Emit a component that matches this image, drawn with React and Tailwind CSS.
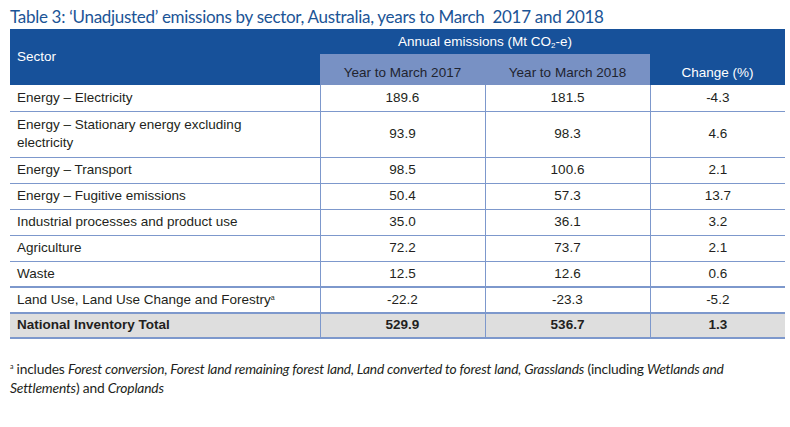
import React from "react";

const rows = [
  { name: "Energy – Electricity", a: "189.6", b: "181.5", c: "-4.3" },
  { name: "Energy – Stationary energy excluding electricity", a: "93.9", b: "98.3", c: "4.6", tall: true },
  { name: "Energy – Transport", a: "98.5", b: "100.6", c: "2.1" },
  { name: "Energy – Fugitive emissions", a: "50.4", b: "57.3", c: "13.7" },
  { name: "Industrial processes and product use", a: "35.0", b: "36.1", c: "3.2" },
  { name: "Agriculture", a: "72.2", b: "73.7", c: "2.1" },
  { name: "Waste", a: "12.5", b: "12.6", c: "0.6" },
];

function App() {
  return (
    <div className="w-[790px] h-[427px] bg-white pt-[6px] pl-[10px]" style={{ fontFamily: "'Liberation Sans', Arial, sans-serif" }}>
      <h1 className="text-[17px] leading-[22px] text-[#1b5496] tracking-[-0.3px]" style={{ fontFamily: "Lato, 'Open Sans', sans-serif" }}>
        Table 3: ‘Unadjusted’ emissions by sector, Australia, years to March&nbsp; 2017 and 2018
      </h1>
      <table className="mt-[1px] w-[775px] border-collapse text-[13.5px] text-[#231f20] table-fixed">
        <colgroup>
          <col className="w-[310px]" />
          <col className="w-[165px]" />
          <col className="w-[165px]" />
          <col className="w-[135px]" />
        </colgroup>
        <thead>
          <tr className="h-[25px] bg-[#17519a] text-white">
            <th rowSpan={2} className="text-left font-normal pl-[7px] align-middle">Sector</th>
            <th colSpan={2} className="font-normal text-center pt-[2px]">
              Annual emissions (Mt CO<sub className="text-[8px]">2</sub>-e)
            </th>
            <th className="bg-[#17519a]"></th>
          </tr>
          <tr className="h-[31px] text-white">
            <th className="bg-[#7891c4] font-normal text-[#1f2430] pt-[8px]">Year to March 2017</th>
            <th className="bg-[#7891c4] font-normal text-[#1f2430] pt-[8px]">Year to March 2018</th>
            <th className="bg-[#17519a] font-normal pt-[8px]">Change (%)</th>
          </tr>
        </thead>
        <tbody>
          {rows.map((r) => (
            <tr key={r.name} className={`${r.tall ? "h-[46px]" : "h-[26px]"} border-b border-[#7d98cc]`}>
              <td className="pl-[7px] pr-[50px] leading-[18px] align-middle">{r.name}</td>
              <td className="text-center border-l border-[#7d98cc]">{r.a}</td>
              <td className="text-center border-l border-[#7d98cc]">{r.b}</td>
              <td className="text-center border-l border-[#7d98cc]">{r.c}</td>
            </tr>
          ))}
          <tr className="h-[26px] border-t-2 border-b-2 border-[#7d98cc]">
            <td className="pl-[7px]">
              Land Use, Land Use Change and Forestry<sup className="text-[7px]">a</sup>
            </td>
            <td className="text-center border-l border-[#7d98cc]">-22.2</td>
            <td className="text-center border-l border-[#7d98cc]">-23.3</td>
            <td className="text-center border-l border-[#7d98cc]">-5.2</td>
          </tr>
          <tr className="h-[25px] bg-[#dedede] font-bold border-b-2 border-[#7d98cc]">
            <td className="pl-[7px]">National Inventory Total</td>
            <td className="text-center border-l border-[#7d98cc]">529.9</td>
            <td className="text-center border-l border-[#7d98cc]">536.7</td>
            <td className="text-center border-l border-[#7d98cc]">1.3</td>
          </tr>
        </tbody>
      </table>
      <p className="mt-[20px] text-[13.8px] leading-[19px] text-[#231f20] w-[735px] tracking-[-0.2px]" style={{ fontFamily: "Lato, 'Open Sans', sans-serif" }}>
        <span className="text-[7px] align-[5px] leading-none">a</span> includes <i>Forest conversion, Forest land remaining forest land, Land converted to forest land, Grasslands</i> (including <i>Wetlands and Settlements</i>) and <i>Croplands</i>
      </p>
    </div>
  );
}

export default App;
